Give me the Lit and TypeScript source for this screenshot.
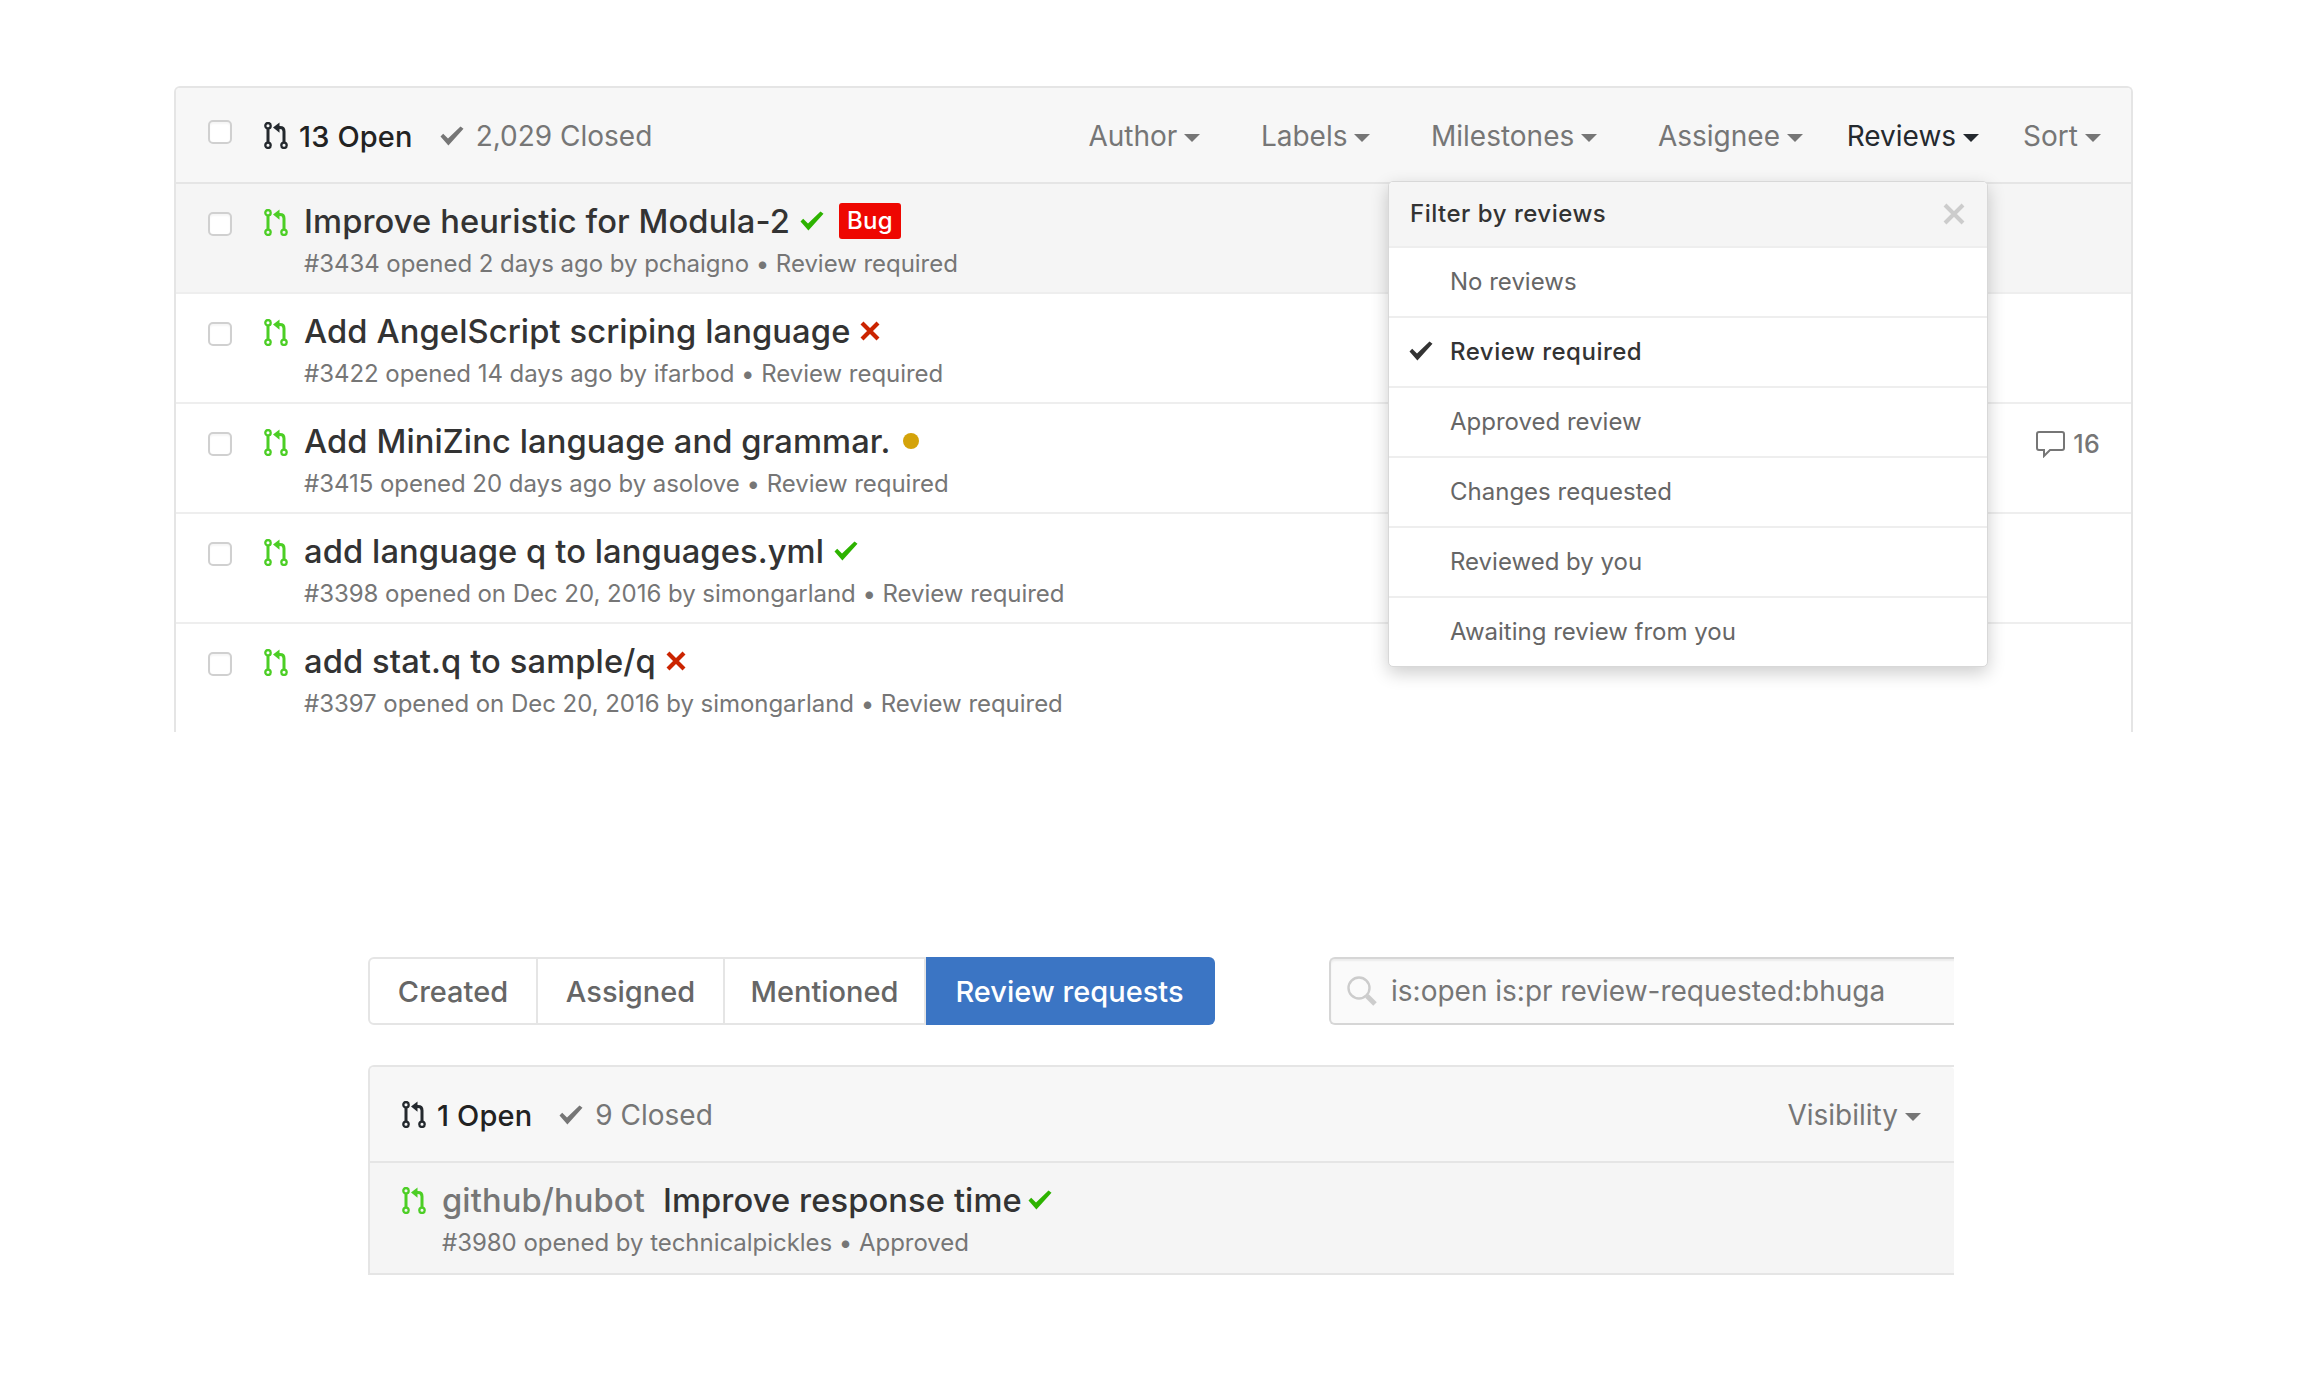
import { LitElement, html, css } from "lit";
import { customElement } from "lit/decorators.js";

const prIcon = (color: string) => html`<svg class="pr" width="24" height="27" viewBox="0 0 24 27" fill="none" stroke=${color} stroke-width="2.3">
  <circle cx="4" cy="3.7" r="2.7"/><circle cx="4" cy="23.3" r="2.7"/><circle cx="20" cy="23.3" r="2.7"/>
  <path d="M4 6.3V20.7M20 20.7V9.5Q20 5.6 16 5.6H13" stroke-width="3"/>
  <path d="M9 5.6L15.5 .4V10.8Z" fill=${color} stroke="none"/></svg>`;
const checkPath = "M0.5 10.5L3.2 7.8L8 12.6L20.5 .5L23.5 2.8L8.4 19.5Z";
const check = (color: string) => html`<svg class="st" width="24" height="20" viewBox="0 0 24 20"><path d=${checkPath} fill=${color}/></svg>`;
const cross = html`<svg class="st" width="20" height="20" viewBox="0 0 20 20"><path d="M2 2L18 18M18 2L2 18" stroke="#cb2400" stroke-width="4.2"/></svg>`;
const dot = html`<span class="dot"></span>`;
const caret = html`<span class="caret"></span>`;

const rows = [
  { t: "Improve heuristic for Modula-2", s: check("#2db300"), m: "#3434 opened 2 days ago by pchaigno • Review required", hl: true, bug: true },
  { t: "Add AngelScript scriping language", s: cross, m: "#3422 opened 14 days ago by ifarbod • Review required" },
  { t: "Add MiniZinc language and grammar.", s: dot, m: "#3415 opened 20 days ago by asolove • Review required", comments: 16 },
  { t: "add language q to languages.yml", s: check("#2db300"), m: "#3398 opened on Dec 20, 2016 by simongarland • Review required" },
  { t: "add stat.q to sample/q", s: cross, m: "#3397 opened on Dec 20, 2016 by simongarland • Review required", last: true },
];
const filters = [["Author", 0], ["Labels", 60.5], ["Milestones", 60.5], ["Assignee", 60.7], ["Reviews", 43.7], ["Sort", 44]] as const;
const menu = ["No reviews", "Review required", "Approved review", "Changes requested", "Reviewed by you", "Awaiting review from you"];

@customElement("app-root")
export class AppRoot extends LitElement {
  static styles = css`
    :host { display: block; width: 2300px; height: 1388px; background: #fff; font-family: Inter, "Noto Sans", sans-serif; color: #333; overflow: hidden; }
    .page { display: flex; flex-direction: column; }
    .panel { position: relative; box-sizing: border-box; margin: 86px 0 0 174px; width: 1959px; height: 646px; border: solid #e5e5e5; border-width: 2px 2px 0; border-radius: 6px 6px 0 0; }
    .head { box-sizing: border-box; height: 96px; background: #f7f7f7; border-bottom: 2px solid #e5e5e5; display: flex; align-items: center; padding: 2px 30px 0 0; border-radius: 4px 4px 0 0; }
    .cb { flex: none; box-sizing: border-box; width: 24px; height: 24px; background: #fff; border: 2px solid #d0d0d0; border-radius: 5px; box-shadow: inset 0 2px 2px rgba(0,0,0,.04); }
    .head .cb { margin: -8px 32px 0 32px; }
    .states { display: flex; align-items: center; font-size: 28px; }
    .states .pr { margin-top: -2px; }
    .open { font-size: 29px; font-weight: 500; letter-spacing: .15px; color: #222; margin-left: 11px; }
    .closed { color: #767676; margin-left: 12px; }
    .chk { margin-left: 27px; display: flex; }
    .chk .st { margin-left: 0; }
    .spacer { flex: 1; }
    .f { font-size: 28px; color: #767676; display: flex; align-items: center; gap: 7px; }
    .f.on { color: #24292e; }
    .caret { width: 0; height: 0; border: 8px solid transparent; border-top: 8px solid currentColor; border-bottom: 0; margin-top: 3px; }
    .row { box-sizing: border-box; height: 110px; border-bottom: 2px solid #eee; display: flex; padding: 0 32px; position: relative; }
    .row.hl { background: #f5f5f5; }
    .row.last { border-bottom: 0; }
    .row .cb { margin-top: 28px; margin-right: 32px; }
    .row .pr { margin-top: 25px; flex: none; }
    .txt { margin-left: 16px; padding-top: 17px; }
    .t { display: flex; align-items: center; font-size: 32.7px; font-weight: 550; letter-spacing: .1px; line-height: 40px; color: #333; white-space: nowrap; }
    .st { margin-left: 10px; flex: none; }
    .dot { width: 16px; height: 16px; background: #d4a30a; border-radius: 50%; margin-left: 12px; }
    .bug { margin-left: 15px; background: #ee0701; color: #fff; font-size: 24px; font-weight: 500; letter-spacing: .3px; line-height: 36px; padding: 0 8px; border-radius: 3px; }
    .m { font-size: 24px; letter-spacing: -.04px; color: #767676; line-height: 30px; margin-top: 8px; white-space: nowrap; }
    .cm { position: absolute; top: 25px; right: 31px; display: flex; align-items: center; gap: 8px; color: #767676; font-size: 25px; font-weight: 500; letter-spacing: .3px; }
    .menu { position: absolute; left: 1212px; top: 93px; width: 600px; box-sizing: border-box; background: #fff; border: 1px solid #d8d8d8; border-radius: 5px; box-shadow: 0 6px 18px rgba(0,0,0,.2); overflow: hidden; }
    .mh { box-sizing: border-box; height: 66px; background: #f5f5f5; border-bottom: 2px solid #eee; display: flex; align-items: center; justify-content: space-between; padding: 0 22px 1px 21px; font-size: 24px; font-weight: 500; letter-spacing: .5px; color: #333; }
    .mi { box-sizing: border-box; height: 70px; border-bottom: 2px solid #eee; display: flex; align-items: center; padding: 0 0 1px 61px; position: relative; font-size: 24px; color: #666; }
    .mi:last-child { border-bottom: 0; height: 68px; }
    .mi.sel { color: #333; font-weight: 500; letter-spacing: .5px; }
    .mi svg { position: absolute; left: 20px; top: 23px; }
    .nav { display: flex; margin: 225px 0 0 368px; width: 1586px; overflow: hidden; }
    .tabs { display: flex; height: 68px; box-sizing: border-box; width: 847px; }
    .tab { box-sizing: border-box; display: flex; align-items: center; justify-content: center; border: 2px solid #e5e5e5; border-left: 0; font-size: 29px; font-weight: 500; color: #666; }
    .tab:first-child { border-left: 2px solid #e5e5e5; border-radius: 6px 0 0 6px; }
    .tab.on { background: #3b75c4; border-color: #3b75c4; color: #fff; border-radius: 0 6px 6px 0; }
    .search { box-sizing: border-box; margin-left: 114px; flex: none; width: 640px; height: 68px; border: 2px solid #d6d6d6; border-right: 0; border-radius: 6px 0 0 6px; background: #fafafa; box-shadow: inset 0 2px 2px rgba(0,0,0,.06); display: flex; align-items: center; padding-left: 15px; gap: 13px; font-size: 28px; color: #767676; white-space: nowrap; }
    .panel2 { box-sizing: border-box; margin: 40px 0 0 368px; width: 1586px; height: 210px; border: solid #e5e5e5; border-width: 2px 0 2px 2px; border-radius: 6px 0 0 0; }
    .panel2 .head { padding: 2px 33px 0 32px; height: 96px; }
    .panel2 .row { height: 110px; background: #f5f5f5; border: 0; padding-left: 32px; }
    .repo { color: #767676; margin-right: 18px; }
    .panel2 .row .pr { margin-top: 24px; }
    .panel2 .txt { padding-top: 17px; margin-left: 16px; }
    .panel2 .t .st { margin-left: 6px; }
  `;

  render() {
    return html`<div class="page">
      <section class="panel">
        <div class="head">
          <span class="cb"></span>
          <div class="states">
            ${prIcon("#24292e")}
            <span class="open">13 Open</span>
            <span class="chk">${check("#767676")}</span>
            <span class="closed">2,029 Closed</span>
          </div>
          <div class="spacer"></div>
          ${filters.map(([n, g]) => html`<div class="f ${n === "Reviews" ? "on" : ""}" style="margin-left:${g}px">${n}${caret}</div>`)}
        </div>
        ${rows.map((r) => html`<div class="row ${r.hl ? "hl" : ""} ${r.last ? "last" : ""}">
          <span class="cb"></span>${prIcon("#4cce25")}
          <div class="txt">
            <div class="t">${r.t}${r.s}${r.bug ? html`<span class="bug">Bug</span>` : ""}</div>
            <div class="m">${r.m}</div>
          </div>
          ${r.comments ? html`<div class="cm"><svg width="29" height="27" viewBox="0 0 29 27" fill="none" stroke="#767676" stroke-width="2"><path d="M3 1H26Q28 1 28 3V17Q28 19 26 19H14L8 25V19H3Q1 19 1 17V3Q1 1 3 1Z"/></svg>${r.comments}</div>` : ""}
        </div>`)}
        <div class="menu">
          <div class="mh">Filter by reviews<svg width="22" height="22" viewBox="0 0 22 22"><path d="M2 2L20 20M20 2L2 20" stroke="#ccc" stroke-width="4"/></svg></div>
          ${menu.map((m) => html`<div class="mi ${m === "Review required" ? "sel" : ""}">${m === "Review required" ? html`<svg width="24" height="20" viewBox="0 0 24 20"><path d=${checkPath} fill="#333"/></svg>` : ""}${m}</div>`)}
        </div>
      </section>
      <div class="nav">
        <div class="tabs">
          <div class="tab" style="width:170px">Created</div>
          <div class="tab" style="width:187px">Assigned</div>
          <div class="tab" style="width:201px">Mentioned</div>
          <div class="tab on" style="width:289px">Review requests</div>
        </div>
        <div class="search">
          <svg width="32" height="30" viewBox="0 0 32 30" fill="none" stroke="#ccc"><circle cx="13" cy="12" r="10.5" stroke-width="2.4"/><path d="M21 20L29 28" stroke-width="5"/></svg>
          is:open is:pr review-requested:bhuga
        </div>
      </div>
      <section class="panel2">
        <div class="head">
          <div class="states">${prIcon("#24292e")}
            <span class="open">1 Open</span>
            <span class="chk">${check("#767676")}</span>
            <span class="closed">9 Closed</span>
          </div>
          <div class="spacer"></div>
          <div class="f">Visibility${caret}</div>
        </div>
        <div class="row">
          ${prIcon("#4cce25")}
          <div class="txt">
            <div class="t"><span class="repo">github/hubot</span>Improve response time${check("#2db300")}</div>
            <div class="m">#3980 opened by technicalpickles • Approved</div>
          </div>
        </div>
      </section>
    </div>`;
  }
}
